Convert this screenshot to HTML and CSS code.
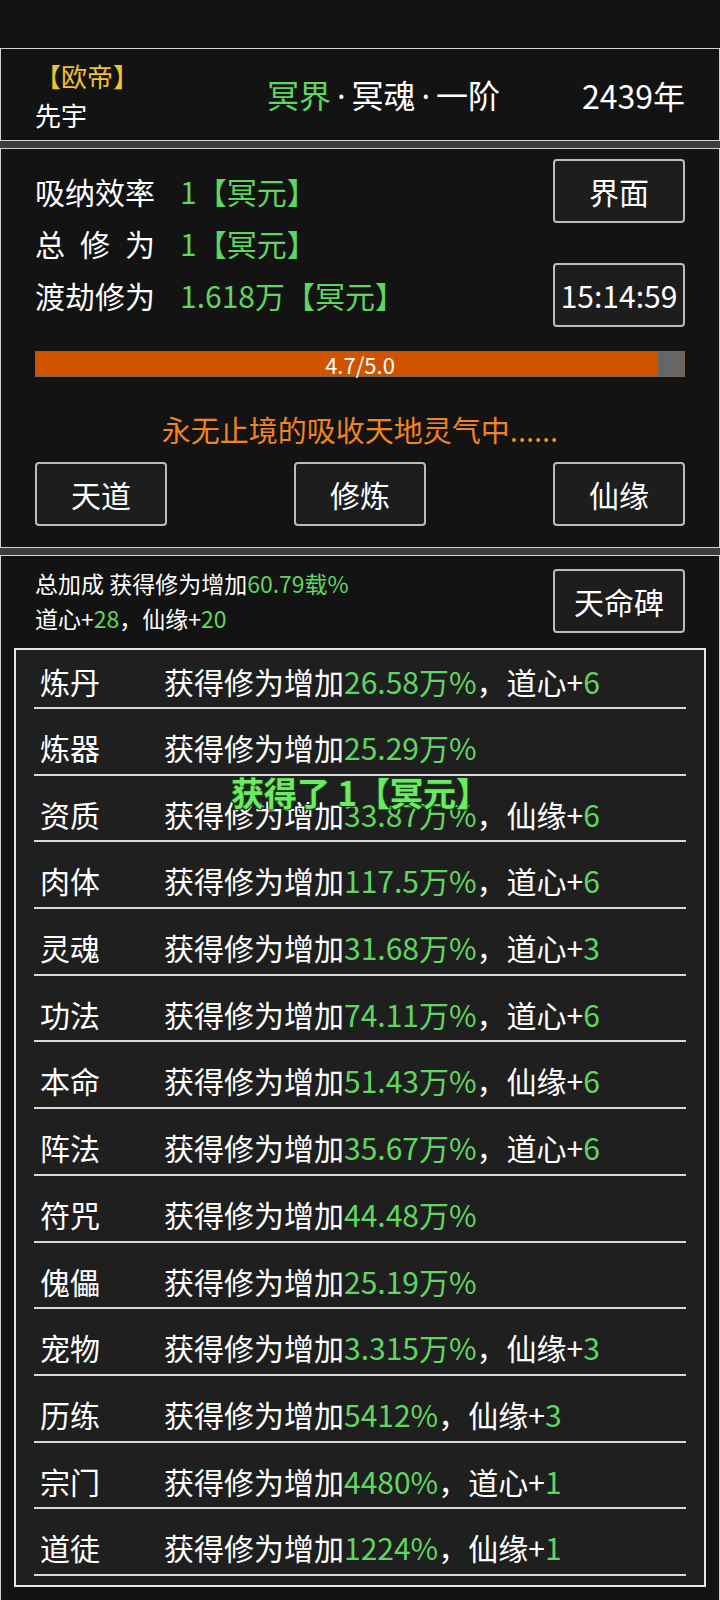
FILE: index.html
```html
<!DOCTYPE html>
<html lang="zh">
<head>
  <meta charset="UTF-8" />
  <meta name="viewport" content="width=device-width, initial-scale=1.0"/>
  <title>修炼</title>
  <link rel="stylesheet" href="styles.css">
</head>
<body>
  <div class="statusbar"></div>

  <div class="panel header">
    <div class="who">
      <div class="rank">【欧帝】</div>
      <div class="name">先宇</div>
    </div>
    <div class="realm"><span class="green">冥界</span><span class="dot">·</span>冥魂<span class="dot">·</span>一阶</div>
    <div class="year">2439年</div>
  </div>

  <div class="panel main">
    <div class="top">
      <div class="stats">
        <div class="stat"><span class="label">吸纳效率</span><span class="green">1【冥元】</span></div>
        <div class="stat"><span class="label">总修为</span><span class="green">1【冥元】</span></div>
        <div class="stat"><span class="label">渡劫修为</span><span class="green">1.618万【冥元】</span></div>
      </div>
      <div class="side">
        <button class="btn">界面</button>
        <button class="btn">15:14:59</button>
      </div>
    </div>

    <div class="bar">
      <div class="fill" style="width: 96%"></div>
      <div class="bar-text">4.7/5.0</div>
    </div>

    <div class="status">永无止境的吸收天地灵气中......</div>

    <div class="actions">
      <button class="btn">天道</button>
      <button class="btn">修炼</button>
      <button class="btn">仙缘</button>
    </div>
  </div>

  <div class="panel bonus">
    <div class="bonus-head">
      <div class="summary">
        <div>总加成 获得修为增加<span class="green">60.79载%</span></div>
        <div>道心+<span class="green">28</span>，仙缘+<span class="green">20</span></div>
      </div>
      <button class="btn">天命碑</button>
    </div>

    <div class="list">
      <div class="row"><span class="item">炼丹</span><span>获得修为增加<span class="green">26.58万%</span>，道心+<span class="green">6</span></span></div>
      <div class="row"><span class="item">炼器</span><span>获得修为增加<span class="green">25.29万%</span></span></div>
      <div class="row"><span class="item">资质</span><span>获得修为增加<span class="green">33.87万%</span>，仙缘+<span class="green">6</span></span></div>
      <div class="row"><span class="item">肉体</span><span>获得修为增加<span class="green">117.5万%</span>，道心+<span class="green">6</span></span></div>
      <div class="row"><span class="item">灵魂</span><span>获得修为增加<span class="green">31.68万%</span>，道心+<span class="green">3</span></span></div>
      <div class="row"><span class="item">功法</span><span>获得修为增加<span class="green">74.11万%</span>，道心+<span class="green">6</span></span></div>
      <div class="row"><span class="item">本命</span><span>获得修为增加<span class="green">51.43万%</span>，仙缘+<span class="green">6</span></span></div>
      <div class="row"><span class="item">阵法</span><span>获得修为增加<span class="green">35.67万%</span>，道心+<span class="green">6</span></span></div>
      <div class="row"><span class="item">符咒</span><span>获得修为增加<span class="green">44.48万%</span></span></div>
      <div class="row"><span class="item">傀儡</span><span>获得修为增加<span class="green">25.19万%</span></span></div>
      <div class="row"><span class="item">宠物</span><span>获得修为增加<span class="green">3.315万%</span>，仙缘+<span class="green">3</span></span></div>
      <div class="row"><span class="item">历练</span><span>获得修为增加<span class="green">5412%</span>，仙缘+<span class="green">3</span></span></div>
      <div class="row"><span class="item">宗门</span><span>获得修为增加<span class="green">4480%</span>，道心+<span class="green">1</span></span></div>
      <div class="row"><span class="item">道徒</span><span>获得修为增加<span class="green">1224%</span>，仙缘+<span class="green">1</span></span></div>
    </div>
  </div>

  <div class="toast">获得了 1【冥元】</div>
</body>
</html>
```

FILE: styles.css
```css
body {
  margin: 0;
  background: #3d3d3d;
  color: #fff;
  font-family: "Noto Sans CJK SC", "Noto Sans", sans-serif;
  font-size: 30px;
  position: relative;
  overflow: hidden;
  height: 1600px;
}

.statusbar {
  height: 48px;
  background: #111;
}

.panel {
  background: #131313;
  border: 1px solid #d4d4d4;
  box-sizing: border-box;
  margin-bottom: 7px;
}

.green {
  color: #5fd65f;
}

/* header */
.header {
  height: 93px;
  display: flex;
  align-items: center;
  padding: 0 34px;
}

.who {
  width: 150px;
  font-size: 26px;
  line-height: 39px;
}

.rank {
  color: #f0c22c;
}

.realm {
  flex: 1;
  text-align: center;
  font-size: 32px;
  line-height: 40px;
}

.dot {
  font-family: "Noto Sans", sans-serif;
  padding: 0 6px;
}

.year {
  font-size: 32px;
}

/* main panel */
.main {
  height: 400px;
  padding: 10px 34px 0;
}

.top {
  display: flex;
  justify-content: space-between;
}

.stats {
  margin-top: 6px;
}

.stat {
  display: flex;
  line-height: 52px;
}

.label {
  width: 120px;
  margin-right: 25px;
  text-align: justify;
  text-align-last: justify;
}

.side {
  display: flex;
  flex-direction: column;
  gap: 40px;
}

.btn {
  width: 132px;
  height: 64px;
  background: #1d1d1d;
  border: 2px solid #bcbcbc;
  border-radius: 4px;
  color: #fff;
  font-family: inherit;
  font-size: 30px;
  padding: 0;
}

.bar {
  position: relative;
  margin-top: 24px;
  height: 26px;
  background: #666;
  box-sizing: border-box;
  border: 1px solid #7a6656;
}

.fill {
  height: 100%;
  background: #d05400;
}

.bar-text {
  position: absolute;
  top: 0;
  left: 0;
  right: 0;
  text-align: center;
  font-size: 22px;
  line-height: 24px;
}

.status {
  margin-top: 32px;
  line-height: 40px;
  font-size: 29px;
  text-align: center;
  color: #f0841f;
}

.actions {
  margin-top: 13px;
  display: flex;
  justify-content: space-between;
}

/* bonus panel */
.bonus {
  padding: 10px 13px 13px;
  margin-bottom: 0;
}

.bonus-head {
  display: flex;
  justify-content: space-between;
  align-items: center;
  padding: 0 21px;
}

.summary {
  font-size: 23px;
  line-height: 35px;
}

.list {
  margin-top: 12px;
  background: #1f1f1f;
  border: 2px solid #e6e6e6;
  padding: 0 18px 9px;
}

.row {
  display: flex;
  line-height: 30px;
  padding: 23px 0 11.7px;
  border-bottom: 2px solid #d8d8d8;
}

.row:first-child {
  padding: 16px 0 11px;
}

.item {
  width: 124px;
  padding-left: 6px;
  flex-shrink: 0;
}

.toast {
  position: absolute;
  top: 771px;
  left: 0;
  right: 0;
  text-align: center;
  line-height: 42px;
  font-size: 33px;
  font-weight: bold;
  color: #6ceb62;
  text-shadow: 1px 1px 0 #173d17, -1px -1px 0 #173d17, 1px -1px 0 #173d17, -1px 1px 0 #173d17;
}
```
